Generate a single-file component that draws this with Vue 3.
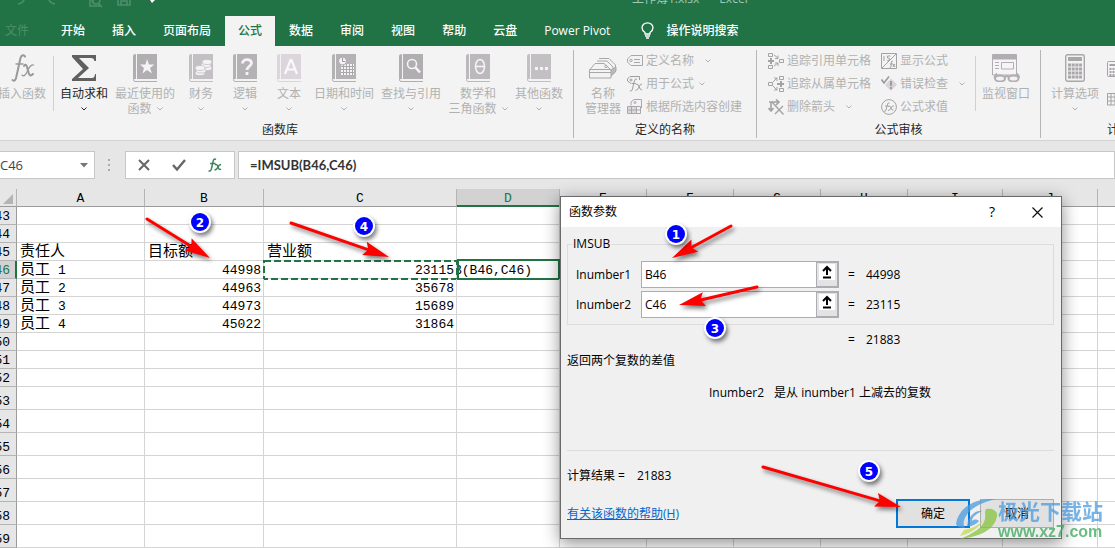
<script setup>
import { ref } from 'vue'

const tabs = ['开始', '插入', '页面布局', '公式', '数据', '审阅', '视图', '帮助', '云盘', 'Power Pivot']
const activeTab = ref('公式')

const library = [
  { icon: 'sum', lines: ['自动求和'], w: 60, on: true },
  { icon: 'star', lines: ['最近使用的', '函数'], w: 62, tone: '#b1aeb1' },
  { icon: 'coins', lines: ['财务'], w: 50, tone: '#c3c0c3' },
  { icon: 'question', lines: ['逻辑'], w: 38, tone: '#b5b2b5' },
  { icon: 'letter', lines: ['文本'], w: 50, tone: '#dcd6dc' },
  { icon: 'date', lines: ['日期和时间'], w: 60, tone: '#b5b2b5' },
  { icon: 'search', lines: ['查找与引用'], w: 74, tone: '#b1aeb1' },
  { icon: 'theta', lines: ['数学和', '三角函数'], w: 60, tone: '#bcb9bc' },
  { icon: 'dots', lines: ['其他函数'], w: 62, tone: '#c3c0c3' },
]

const columns = [
  { name: 'A', w: 128 }, { name: 'B', w: 119 }, { name: 'C', w: 193 }, { name: 'D', w: 103 },
  { name: 'E', w: 87 }, { name: 'F', w: 87 }, { name: 'G', w: 87 }, { name: 'H', w: 87 },
  { name: 'I', w: 95 }, { name: 'J', w: 95 }, { name: '', w: 0 },
]

const data = {
  45: { A: '责任人', B: '目标额', C: '营业额' },
  46: { A: '员工', n: '1', B: 44998, C: 23115 },
  47: { A: '员工', n: '2', B: 44963, C: 35678 },
  48: { A: '员工', n: '3', B: 44973, C: 15689 },
  49: { A: '员工', n: '4', B: 45022, C: 31864 },
}
const rows = Array.from({ length: 17 }, (_, i) => 43 + i)
const cell = (r, c) => (data[r] ? data[r][c] : undefined)

const formula = ref('=IMSUB(B46,C46)')
const nameBox = ref('C46')
const args = ref([
  { id: 'arg1', label: 'Inumber1', value: 'B46', result: '44998' },
  { id: 'arg2', label: 'Inumber2', value: 'C46', result: '23115' },
])

const arrows = [
  [147, 219, 210, 258], [291, 223, 389, 257], [731, 226, 672, 258], [757, 287, 679, 305], [763, 467, 901, 507],
].map(([x1, y1, x2, y2]) => {
  const len = Math.hypot(x2 - x1, y2 - y1)
  const ux = (x2 - x1) / len
  const uy = (y2 - y1) / len
  const at = (back, side) => `${x2 - ux * back - uy * side},${y2 - uy * back + ux * side}`
  return { x1, y1, x2: x2 - ux * 20, y2: y2 - uy * 20, head: [at(0, 0), at(26, 7), at(22, 0), at(26, -7)].join(' ') }
})
const badges = [
  { n: 1, x: 676, y: 234 }, { n: 2, x: 200, y: 222 }, { n: 3, x: 715, y: 328 },
  { n: 4, x: 364, y: 226 }, { n: 5, x: 869, y: 471 },
]
</script>

<template>
  <div class="app">
    <header class="top">
      <div class="titlebar">
        <svg class="quick" width="150" height="8" viewBox="0 0 150 8" fill="none">
          <g stroke="#4e8f6b" stroke-width="1.6">
            <path d="M10 0Q9 3 4 4" /><path d="M35 0Q36 3 41 4" />
            <path d="M76 0V6H86M79 0V3M84 3L88 7" /><circle cx="82" cy="0" r="4" />
            <path d="M104 0V5H116V0M107 5V1H113V5" />
          </g>
          <path d="M136 0H141L138 3Z" fill="#fff" />
        </svg>
        <span class="doc">工作簿1.xlsx</span><span>-</span><span class="prog">Excel</span>
      </div>
      <nav class="tabs">
        <button class="tab file">文件</button>
        <button v-for="t in tabs" :key="t" class="tab" :class="{ active: t === activeTab }" @click="activeTab = t">{{ t }}</button>
        <button class="tell">
          <svg width="13" height="18" viewBox="0 0 13 18" fill="none" stroke="#fff" stroke-width="1.3">
            <path d="M4 12V10.500C2.500 9.500 1 8 1 5.800A5.500 5 0 0 1 12 5.800C12 8 10.500 9.500 9 10.500V12ZM4 14H9M5 16H8" />
          </svg>
          操作说明搜索
        </button>
      </nav>
    </header>

    <section class="ribbon">
      <div class="group lib">
        <div class="body">
          <button class="big insert">
            <svg width="26" height="28" viewBox="0 0 26 28" fill="none" stroke="#999" stroke-linecap="round">
              <path d="M16 2.500C15 .5 12.500 .5 11.500 4L7.500 22C7 26 5 28 3.500 26" stroke-width="2" />
              <path d="M7 10H14" stroke-width="1.300" />
              <path d="M15 12C17 9 18 12 19 16.500S21 23 24 20" stroke-width="2" />
              <path d="M24.500 11C22 10 19 15 18 18S14 23 13 21" stroke-width="1.300" />
            </svg>
            <span class="line">插入函数</span>
          </button>
          <i class="sep"></i>
          <button v-for="b in library" :key="b.icon" class="big" :class="{ on: b.on }" :style="{ width: b.w + 'px' }">
            <svg v-if="b.icon === 'sum'" width="24" height="28" viewBox="0 0 24 28">
              <path d="M0 1H24V7H22.500C22 5 21 4 19 4H7L17 14L6 24H20C22 24 23 22 23 20H24.500V27H0V25L11 15L0 3Z" fill="#606060" />
            </svg>
            <svg v-else width="24" height="28" viewBox="0 0 24 28">
              <path d="M3 0V25H1.500L0 26V2Q0 0 3 0Z" :fill="b.tone" />
              <path d="M4 0H24V25H4Z" :fill="b.tone" />
              <path d="M24 27.500H2Q.5 27.500 .5 25.500" fill="none" :stroke="b.tone" />
              <path v-if="b.icon === 'star'" d="M14 5L16 10.500H21.500L17 14L19 19.500L14 16L9.500 19.500L11 14L7 10.500H12.500Z" fill="#f5f3f5" />
              <g v-else-if="b.icon === 'coins'" fill="#f5f3f5" :stroke="b.tone" stroke-width=".8">
                <ellipse cx="18" cy="14" rx="5" ry="2.500" /><ellipse cx="17" cy="11" rx="5" ry="2.500" /><ellipse cx="18" cy="8" rx="5" ry="2.500" />
                <ellipse cx="11" cy="19" rx="5" ry="2.500" /><ellipse cx="12" cy="16.500" rx="5" ry="2.500" /><ellipse cx="11" cy="14" rx="5" ry="2.500" />
              </g>
              <g v-else-if="b.icon === 'question'" fill="none" stroke="#f5f3f5" stroke-width="2.800">
                <path d="M9.500 9.500C9.500 4.500 18.500 4.500 18.500 9C18.500 12 14 12.500 14 16" /><path d="M14 18V21" />
              </g>
              <path v-else-if="b.icon === 'letter'" d="M8 20L13.500 6H14.500L20 20M10 15.500H18" fill="none" stroke="#faf8fa" stroke-width="2.200" />
              <g v-else-if="b.icon === 'date'">
                <path d="M9 10H22V21H9Z" fill="#f5f3f5" />
                <path d="M9 12.500H22M9 15.500H22M9 18.500H22M11.500 10V21M14.500 10V21M17.500 10V21M20.500 10V21" stroke="#aaa7aa" stroke-width="1" />
                <circle cx="10.500" cy="7" r="4" fill="#f5f3f5" stroke="#aaa7aa" /><path d="M10.500 4V7.500H13" fill="none" stroke="#999" />
              </g>
              <g v-else-if="b.icon === 'search'" fill="none" stroke="#f5f3f5">
                <circle cx="13" cy="10" r="4.500" stroke-width="1.600" /><path d="M16.500 13.500L21 18.500" stroke-width="2.600" />
              </g>
              <g v-else-if="b.icon === 'theta'" fill="none" stroke="#f5f3f5" stroke-width="1.600">
                <ellipse cx="14" cy="12.500" rx="4.500" ry="7" /><path d="M10 12.500H18" />
              </g>
              <path v-else d="M8 13H11V16H8ZM13 13H16V16H13ZM18 13H21V16H18Z" fill="#f5f3f5" />
            </svg>
            <span class="line">{{ b.lines[0] }}</span>
            <span class="line">{{ b.lines[1] }}<svg class="chev" width="6" height="4" viewBox="0 0 6 4"><path d="M.5 .5L3 3L5.500 .5" /></svg></span>
          </button>
        </div>
        <h2>函数库</h2>
      </div>

      <div class="group names">
        <div class="body">
          <button class="big">
            <svg width="28" height="28" viewBox="0 0 28 28" fill="#f3f3f3" stroke="#aaa7aa">
              <path d="M10 4.500H20L26.500 11V18L22 22" /><path d="M8 7H18L24 13V20" /><path d="M6 9.500H15L21 15" />
              <path d="M1 15.500L6 9.500M22 22L27 17V13L22 16" fill="#bbb" /><circle cx="17" cy="12.500" r="1.200" />
              <path d="M.5 15.500H22V24H.5Z" /><path d="M1 18.500H22" />
            </svg>
            <span class="line">名称</span><span class="line">管理器</span>
          </button>
          <div class="stack">
            <button class="small">
              <svg width="16" height="16" viewBox="0 0 16 16" fill="none" stroke="#aaa7aa"><path d="M4 2.500H15.500V12.500H4L.5 9V6ZM7 6.500H13M7 9.500H13" /><circle cx="4" cy="7.500" r="1.200" /></svg>
              定义名称<svg class="chev far" width="6" height="4" viewBox="0 0 6 4"><path d="M.5 .5L3 3L5.500 .5" /></svg>
            </button>
            <button class="small">
              <svg width="16" height="16" viewBox="0 0 16 16" fill="none" stroke="#a09da0"><path d="M4 7.500L.5 5V3L3 .5H12.500V4" /><circle cx="4" cy="4" r="1" /><path d="M10 3Q8 2 7 6L5.500 13Q5 15.500 3 15M4.500 7.500H9M9 8.500Q11 7 12 10.500T15 14M15 8Q13 8 12 11T8.500 14.500" /></svg>
              用于公式<svg class="chev" width="6" height="4" viewBox="0 0 6 4"><path d="M.5 .5L3 3L5.500 .5" /></svg>
            </button>
            <button class="small">
              <svg width="16" height="16" viewBox="0 0 16 16" fill="none" stroke="#aaa7aa"><path d="M4 6.500V3L7 .5H14.500V9" /><circle cx="8" cy="3.500" r="1" /><path d="M.5 7.500H9.500V14.500H.5ZM.5 11H13M4.500 7V14.500" fill="#ddd8dd" /><path d="M9.500 7.500H13.500V14.500H9.500" /></svg>
              根据所选内容创建
            </button>
          </div>
        </div>
        <h2>定义的名称</h2>
      </div>

      <div class="group audit">
        <div class="body">
          <div class="stack first">
            <button class="small">
              <svg width="16" height="16" viewBox="0 0 16 16" fill="none" stroke="#a5a2a5"><path d="M.5 .5H4.500V3.500H.5ZM.5 12.500H4.500V15.500H.5ZM11.500 6.500H15.500V9.500H11.500Z" /><path d="M0 8H6M3 5V11" stroke-width="2" /><path d="M6 2L10 5M10 2.500V5.500H7M6 13L10 10M7 10H10V13" /></svg>
              追踪引用单元格
            </button>
            <button class="small">
              <svg width="16" height="16" viewBox="0 0 16 16" fill="none" stroke="#a5a2a5"><path d="M11.500 .5H15.500V3.500H11.500ZM11.500 12.500H15.500V15.500H11.500ZM.5 6.500H4.500V9.500H.5Z" /><path d="M9 8H16M13 5V11" stroke-width="2" /><path d="M5 6L9 2M6 2H9V5M5 10L9 14M9 11V14H6" /></svg>
              追踪从属单元格
            </button>
            <button class="small">
              <svg width="16" height="16" viewBox="0 0 16 16" fill="none" stroke="#a5a2a5"><path d="M1 3H11M8 .5L11 3L8 6M3 3V12M.5 9L3 12L5.500 9" stroke-width="1.600" /><path d="M4 3L15.500 15.500M15 7L7 15" stroke-width="1.400" /></svg>
              删除箭头<svg class="chev far" width="6" height="4" viewBox="0 0 6 4"><path d="M.5 .5L3 3L5.500 .5" /></svg>
            </button>
          </div>
          <div class="stack second">
            <button class="small">
              <svg width="16" height="16" viewBox="0 0 16 16" fill="none" stroke="#a5a2a5"><path d="M.5 15.500V.5H15.500V15.500ZM1 15L15 1M3 3V8M9.500 3H6.500V5Q9 4.500 8.500 7L6 8M12 8Q10 7 10 14L8.500 15M9 11H12M12 11L14 14M14 11L12 14" /></svg>
              显示公式
            </button>
            <button class="small">
              <svg width="16" height="16" viewBox="0 0 16 16"><path d="M10 2.500L16 8.500L10 15L4 9Z" fill="#d8d3d8" /><path d="M.5 3.500L3 7L8 .5" fill="none" stroke="#999" stroke-width="1.600" /><path d="M10 5V10M10 11V13" stroke="#999" stroke-width="1.800" /></svg>
              错误检查<svg class="chev far" width="6" height="4" viewBox="0 0 6 4"><path d="M.5 .5L3 3L5.500 .5" /></svg>
            </button>
            <button class="small">
              <svg width="16" height="16" viewBox="0 0 16 16" fill="none" stroke="#a5a2a5"><circle cx="8" cy="8" r="7.400" /><path d="M8.500 4Q6.500 3 6 7L5 11Q4.500 13 3 12M4 7H8M7.500 7.500Q9 6 10 9T12.500 11M13 7Q11 6.500 10 9T7 11.500" /></svg>
              公式求值
            </button>
          </div>
          <i class="sep"></i>
          <button class="big watch">
            <svg width="28" height="28" viewBox="0 0 28 28" fill="none" stroke="#b1aeb1"><path d="M.5 .5H24.500V21H.5Z" fill="#f7f4f7" /><path d="M.5 3H24.500" stroke-width="5" /><path d="M9.500 8.500H21.500V15H9.500ZM3 8.500H7M3 11.500H7M3 14.500H7" /><path d="M5 19.500Q3 21 2.500 24M24 19.500Q27 21 27 24M13 23Q15 21 17 23" stroke-width="2" /><ellipse cx="8" cy="24.500" rx="5" ry="3" stroke-width="2" fill="#f3f3f3" /><ellipse cx="21.500" cy="24.500" rx="5" ry="3" stroke-width="2" fill="#f3f3f3" /></svg>
            <span class="line">监视窗口</span>
          </button>
        </div>
        <h2>公式审核</h2>
      </div>

      <div class="group calc">
        <div class="body">
          <button class="big">
            <svg width="20" height="28" viewBox="0 0 20 28" fill="none" stroke="#aaa7aa"><rect x=".7" y=".7" width="18.600" height="26.600" rx="2" stroke-width="1.400" /><path d="M3 5H17" stroke-width="4" /><path d="M3 11H17M3 15H17M3 19H17M3 23H17" stroke-width="3" stroke-dasharray="3 .7" /></svg>
            <span class="line">计算选项</span>
            <span class="line"><svg class="chev" width="6" height="4" viewBox="0 0 6 4"><path d="M.5 .5L3 3L5.500 .5" /></svg></span>
          </button>
          <div class="calcside">
            <button class="small" aria-label="开始计算"><svg width="16" height="16" viewBox="0 0 16 16" fill="none" stroke="#a5a2a5"><rect x=".5" y=".5" width="13" height="15" rx="1" /><path d="M2.500 4H12" stroke-width="2" /><path d="M2.500 8H12M2.500 11H12M2.500 14H12" stroke-width="2" stroke-dasharray="2 1" /></svg></button>
            <button class="small" aria-label="计算工作表"><svg width="16" height="16" viewBox="0 0 16 16" fill="none" stroke="#a5a2a5"><path d="M.5 1.500H15.500V13H.5ZM0 5H16M0 9H16M4 1V13M8 1V13" /></svg></button>
          </div>
        </div>
        <h2>计算</h2>
      </div>
    </section>

    <section class="fbar">
      <div class="namebox">
        <input v-model="nameBox" aria-label="名称框" />
        <svg width="8" height="5" viewBox="0 0 8 5"><path d="M0 0H8L4 4.500Z" fill="#777" /></svg>
      </div>
      <svg class="grip" width="3" height="13" viewBox="0 0 3 13"><path d="M0 1H2M0 6H2M0 11H2" stroke="#aaa" stroke-width="2" /></svg>
      <div class="tools">
        <button aria-label="取消编辑"><svg width="12" height="12" viewBox="0 0 12 12"><path d="M1 1L11 11M11 1L1 11" stroke="#666" stroke-width="2" /></svg></button>
        <button aria-label="输入"><svg width="14" height="12" viewBox="0 0 14 12"><path d="M1 6L5 10.500L13 1" stroke="#666" stroke-width="2.400" fill="none" /></svg></button>
        <button aria-label="插入函数"><svg width="14" height="14" viewBox="0 0 14 14" fill="none" stroke="#3a8559" stroke-width="1.500"><path d="M8 1.500Q5.500 0 5 4L3.500 10.500Q3 13.500 .5 13M2 5.500H7.500M7 7Q9 5.500 10 9T13 11M13 6.500Q11 6.500 10 9T6.500 12" /></svg></button>
      </div>
      <input v-model="formula" class="formula" aria-label="编辑栏" />
    </section>

    <table class="sheet">
      <colgroup>
        <col class="rh" />
        <col v-for="c in columns" :key="c.name" :style="c.w ? { width: c.w + 'px' } : null" />
      </colgroup>
      <thead>
        <tr>
          <th class="corner"><svg width="10" height="10" viewBox="0 0 10 10"><path d="M10 0V10H0Z" fill="#b4b4b4" /></svg></th>
          <th v-for="c in columns" :key="c.name" :class="{ cur: c.name === 'D' }">{{ c.name }}</th>
        </tr>
      </thead>
      <tbody>
        <tr v-for="r in rows" :key="r" :class="{ tall: r > 52 }">
          <th :class="{ cur: r === 46 }"><div class="cell num">{{ r }}</div></th>
          <td v-for="c in columns" :key="c.name">
            <div class="cell" :class="{ num: typeof cell(r, c.name) === 'number' }">
              <span v-if="typeof cell(r, c.name) === 'string'" class="cn">{{ cell(r, c.name) }}</span>
              <span v-else>{{ cell(r, c.name) }}</span>
              <span v-if="c.name === 'A' && data[r] && data[r].n" class="idx">{{ data[r].n }}</span>
            </div>
            <svg v-if="r === 46 && c.name === 'C'" class="ants"><rect x="1" y="1" width="100%" height="100%" /></svg>
            <div v-if="r === 46 && c.name === 'D'" class="edit"><span>{{ formula }}</span></div>
          </td>
        </tr>
      </tbody>
    </table>

    <div class="dialog" role="dialog" aria-label="函数参数">
      <div class="dtitle">
        <span>函数参数</span>
        <button class="help">?</button>
        <button class="close" aria-label="关闭"><svg width="11" height="11" viewBox="0 0 11 11"><path d="M.5 .5L10.500 10.500M10.500 .5L.5 10.500" stroke="#111" stroke-width="1.200" /></svg></button>
      </div>
      <div class="dbody">
        <fieldset>
          <legend>IMSUB</legend>
          <div v-for="a in args" :key="a.id" class="arg">
            <label :for="a.id">{{ a.label }}</label>
            <div class="field">
              <input :id="a.id" v-model="a.value" />
              <button :aria-label="'选择 ' + a.label"><svg width="16" height="16" viewBox="0 0 16 16"><path d="M0 0H16V16H0Z" fill="#fff" /><path d="M8 11V4M4 7L8 3L12 7M4 13.500H12" fill="none" stroke="#000" stroke-width="2" /></svg></button>
            </div>
            <span>=</span><span>{{ a.result }}</span>
          </div>
        </fieldset>
        <div class="arg total"><span></span><span></span><span>=</span><span>21883</span></div>
        <p class="desc">返回两个复数的差值</p>
        <p class="argdesc"><span>Inumber2</span><span>是从 inumber1 上减去的复数</span></p>
        <hr />
        <p class="result"><span>计算结果 =</span><span>21883</span></p>
        <div class="foot">
          <a href="#help">有关该函数的帮助(H)</a>
          <button class="ok">确定</button>
          <button>取消</button>
        </div>
      </div>
    </div>

    <svg class="notes" width="1115" height="548" viewBox="0 0 1115 548">
      <g class="lift">
        <g v-for="(a, i) in arrows" :key="i">
          <line :x1="a.x1" :y1="a.y1" :x2="a.x2" :y2="a.y2" stroke="#f00" stroke-width="3" stroke-linecap="round" />
          <polygon :points="a.head" fill="#f00" />
        </g>
      </g>
      <g v-for="b in badges" :key="b.n">
        <circle class="lift" :cx="b.x" :cy="b.y" r="11" fill="#fff" />
        <circle :cx="b.x" :cy="b.y" r="9" fill="#00f" />
        <text :x="b.x" :y="b.y + 5" text-anchor="middle">{{ b.n }}</text>
      </g>
    </svg>

    <div class="mark">
      <svg width="42" height="42" viewBox="0 0 42 42">
        <path d="M0 26C2 12 15 0 39 1C29 4 16 8 10 18C7 23 7 27 9 30C4 30 1 29 0 26Z" fill="#4a9be0" />
        <path d="M30 11C34 10 39 11 41 15C42 25 32 35 19 38C13 40 8 40 4 41C16 36 27 30 29 21C30 17 28 14 30 11Z" fill="#86c440" />
        <path d="M4 38C13 36 24 30 27 22C22 28 14 31 8 32Z" fill="#c5d94e" />
        <path d="M12 23C15 16 21 12 26 13C20 16 16 19 16 23C18 21 21 21 23 23C20 27 14 29 11 28Z" fill="#4a9be0" />
      </svg>
      <div><strong>极光下载站</strong><span>www.xz7.com</span></div>
    </div>
  </div>
</template>

<style>
html, body { margin: 0; overflow: hidden; }
</style>

<style scoped>
.app {
  position: relative;
  min-height: 100vh;
  overflow: hidden;
  background: #e6e6e6;
  color: #111;
  font: 12px/16px "Open Sans", "Noto Sans CJK SC", sans-serif;
}
.app *, .app *::before { box-sizing: border-box; }
button { border: 0; padding: 0; margin: 0; background: none; font: inherit; color: inherit; white-space: nowrap; }
input { border: 0; padding: 0; margin: 0; min-width: 0; background: none; font: inherit; color: inherit; outline: 0; }
p, h2 { margin: 0; font: inherit; }

.top { background: #217346; color: #fff; }
.titlebar { display: flex; align-items: flex-start; height: 16px; overflow: hidden; color: #a6c7b5; padding-left: 14px; }
.titlebar span { margin-top: -9px; }
.quick { flex: none; margin-right: 468px; }
.doc { margin-right: 8px; }
.prog { margin-left: 8px; }
.tabs { display: flex; height: 30px; gap: 1px; }
.tab { padding: 0 13px; font-weight: 500; }
.tab.file { padding: 0 18px 0 5px; color: #4e8f6b; font-weight: 400; }
.tab.active { background: #f3f3f3; color: #217346; }
.tell { display: flex; align-items: center; gap: 12px; margin-left: 17px; font-weight: 500; }

.ribbon { display: flex; padding: 4px 0 2px; height: 95px; background: #f3f3f3; border-bottom: 1px solid #d2d2d2; color: #b1b1b1; }
.group { flex: none; display: flex; flex-direction: column; justify-content: space-between; border-right: 1px solid #b5b5b5; }
.group h2 { text-align: center; color: #262626; }
.body { display: flex; }
.lib { width: 587px; margin-left: -13px; }
.lib .body { padding-left: 4px; }
.names { width: 183px; }
.names .body { padding-left: 9px; gap: 4px; }
.names .big { width: 40px; }
.audit { width: 284px; }
.audit .body { padding-left: 11px; }
.calc { width: 156px; border: 0; }
.calc .body { padding-left: 4px; }
.big { flex: none; display: flex; flex-direction: column; align-items: center; padding-top: 4px; width: 60px; }
.big.insert { width: 62px; }
.big > svg { margin-bottom: 4px; }
.big.on { color: #262626; }
.line { display: flex; align-items: center; gap: 5px; height: 15px; line-height: 15px; }
.sep { width: 1px; height: 55px; margin-top: 6px; background: #d0d0d0; }
.chev { fill: none; stroke: currentColor; stroke-width: 1px; }
.stack { display: flex; flex-direction: column; gap: 2px; }
.stack.first { width: 113px; }
.stack.second { width: 94px; }
.small { display: flex; align-items: center; gap: 3px; height: 21px; }
.small svg { flex: none; }
.small .chev { margin-left: 2px; }
.small .chev.far { margin-left: 8px; }
.calcside { display: flex; flex-direction: column; gap: 10px; padding: 8px 0 0 2px; }

.fbar { display: flex; align-items: stretch; height: 48px; padding: 10px 0; }
.namebox, .tools, .formula { background: #fff; border: 1px solid #c6c6c6; }
.namebox { display: flex; align-items: center; width: 95px; border-left: 0; padding-right: 6px; font: 13px/18px "Open Sans", sans-serif; color: #444; }
.namebox input { flex: 1; }
.grip { align-self: center; margin: 0 14px 0 13px; }
.tools { display: flex; align-items: center; justify-content: space-between; width: 110px; padding: 0 12px; margin-right: 3px; }
.tools button { display: flex; }
.formula { flex: 1; padding-left: 11px; font: 700 13px/18px Lato, sans-serif; color: #333; }

.sheet { width: 100%; table-layout: fixed; border-collapse: separate; border-spacing: 0; background: #fff; font: 13px/15px "Liberation Mono", "Noto Sans CJK SC", monospace; color: #000; }
.rh { width: 17px; }
.sheet th, .sheet td { padding: 0; border-right: 1px solid #d4d4d4; border-bottom: 1px solid #d4d4d4; }
.sheet td { position: relative; }
.sheet th { background: #e6e6e6; font-weight: 400; border-color: #b4b4b4; }
.sheet thead th { height: 18px; padding-top: 2px; border-bottom-color: #9b9b9b; }
.sheet tbody th { border-right-color: #9b9b9b; }
.sheet thead th.cur { background: #d2d2d2; color: #217346; border-bottom: 0; padding-bottom: 1px; box-shadow: inset 0 -2px #217346; }
.sheet tbody th.cur { background: #d2d2d2; color: #217346; border-right: 2px solid #217346; }
.sheet th:last-child, .sheet td:last-child { border-right: 0; }
.corner { text-align: right; }
.corner svg { display: block; margin: 0 3px 0 auto; }
.cell { display: flex; align-items: flex-end; height: 17px; padding: 0 2px 0 3px; white-space: nowrap; }
.tall .cell { height: 22px; }
.cell.num { justify-content: flex-end; }
th .cell.num { padding-right: 6px; }
th.cur .cell.num { padding-right: 5px; }
.cn { font-size: 15px; line-height: 15px; }
.idx { margin-left: 8px; }
.ants { position: absolute; left: -1px; top: -1px; width: calc(100% + 3px); height: 20px; overflow: visible; }
.ants rect { width: calc(100% - 2px); height: 18px; fill: none; stroke: #217346; stroke-width: 2px; stroke-dasharray: 7 3; }
.edit { position: absolute; left: 0; top: -2px; right: -1px; height: 21px; display: flex; justify-content: flex-end; align-items: flex-end; overflow: hidden; border: 2px solid #217346; background: #fff; padding-right: 26px; }

.dialog { position: absolute; left: 560px; top: 196px; width: 502px; background: #f0f0f0; border: 1px solid #6a6a6a; box-shadow: 0 4px 16px rgba(0, 0, 0, .45); color: #000; }
.dtitle { display: flex; align-items: center; height: 30px; padding: 0 18px 0 8px; background: #fff; }
.dtitle span { flex: 1; }
.help { margin-right: 37px; font-size: 14px; }
.close { display: flex; }
.dbody { padding: 9px 7px 10px 6px; }
fieldset { margin: 0; padding: 9px 0 6px 4px; border: 1px solid #dcdcdc; min-width: 0; }
legend { padding: 0 1px; line-height: 16px; }
.arg { display: grid; grid-template-columns: 65px 207px 18px 1fr; align-items: center; padding-left: 4px; }
.arg + .arg { margin-top: 3px; }
.field { display: flex; width: 198px; height: 27px; background: #fff; border: 1px solid #abadb3; }
.field input { flex: 1; padding-left: 3px; }
.field button { display: flex; align-items: flex-start; justify-content: center; width: 22px; padding-top: 1px; background: #e3e3e3; border: 1px solid #abadb3; }
.total { margin-top: 7px; padding-left: 9px; }
.desc { margin-top: 5px; }
.argdesc { display: flex; gap: 10px; margin-top: 16px; padding-left: 142px; }
hr { margin: 49px 0 17px; border: 0; height: 1px; background: #dcdcdc; }
.result { display: flex; gap: 12px; }
.foot { display: flex; align-items: center; gap: 10px; margin-top: 15px; }
.foot a { margin-right: auto; color: #0066cc; }
.foot button { width: 74px; height: 29px; border: 1px solid #adadad; background: #e1e1e1; }
.foot .ok { border: 2px solid #0078d7; }

.notes { position: absolute; left: 0; top: 0; pointer-events: none; }
.notes text { fill: #fff; font: 700 12px "DejaVu Sans", sans-serif; }
.lift { filter: drop-shadow(2px 3px 2px rgba(0, 0, 0, .5)); }
.mark { position: absolute; left: 956px; top: 498px; display: flex; opacity: .75; pointer-events: none; }
.mark div { display: flex; flex-direction: column; }
.mark strong { font-size: 21px; line-height: 26px; color: #4a9be0; }
.mark span { font: 16px/16px "Liberation Sans", sans-serif; color: #3aa65a; font-weight: 700; }
</style>
